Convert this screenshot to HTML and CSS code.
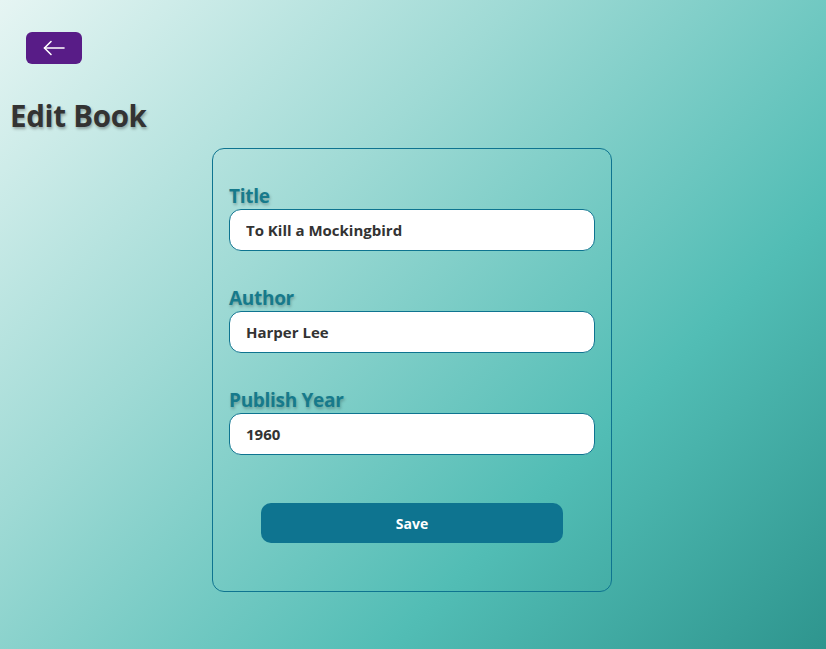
FILE: index.html
```html
<!DOCTYPE html>
<html>
<head>
<meta charset="utf-8">
<link rel="stylesheet" href="styles.css">
</head>
<body>
<div class="page">
  <div class="top">
    <button class="back" aria-label="Back">
      <svg width="24" height="16" viewBox="0 0 24 16" fill="none" stroke="#ffffff" stroke-width="1.6" stroke-linecap="round" stroke-linejoin="round">
        <path d="M22 8H2.5"/>
        <path d="M9 1.5L2.5 8L9 14.5"/>
      </svg>
    </button>
  </div>
  <h1 class="title">Edit Book</h1>
  <form class="card">
    <div class="field">
      <label class="label">Title</label>
      <input class="input" type="text" value="To Kill a Mockingbird">
    </div>
    <div class="field">
      <label class="label">Author</label>
      <input class="input" type="text" value="Harper Lee">
    </div>
    <div class="field">
      <label class="label">Publish Year</label>
      <input class="input" type="text" value="1960">
    </div>
    <div class="actions">
      <button class="save" type="button">Save</button>
    </div>
  </form>
</div>
</body>
</html>
```

FILE: styles.css
```css
* { box-sizing: border-box; }
html, body { margin: 0; height: 100%; }
body {
  font-family: "Open Sans", "Noto Sans", sans-serif;
  background: linear-gradient(135deg, #e6f5f3 0%, #9fdad5 35%, #52bdb5 70%, #2e958e 100%);
  color: #333;
  min-height: 649px;
}
.page { padding: 0 8px; }
.top { padding: 32px 0 0 18px; }
.back {
  width: 56px;
  height: 32px;
  border: none;
  border-radius: 6px;
  background: #581c87;
  display: flex;
  align-items: center;
  justify-content: center;
  padding: 0;
}
.title {
  margin: 32px 0 0 2px;
  font-size: 29.5px;
  font-weight: 700;
  line-height: 40px;
  color: #333;
  letter-spacing: -0.3px;
  text-shadow: 1px 2px 3px rgba(0,0,0,0.3);
}
.card {
  width: 400px;
  margin: 12px auto 0 auto;
  position: relative;
  left: -1px;
  border: 1px solid #0e7490;
  border-radius: 12px;
  padding: 34px 16px 48px 16px;
  display: flex;
  flex-direction: column;
  gap: 34px;
}
.field { display: flex; flex-direction: column; }
.label {
  font-size: 19px;
  font-weight: 700;
  line-height: 26px;
  color: #167a8b;
  letter-spacing: -0.3px;
  text-shadow: 1px 2px 3px rgba(0,0,0,0.25);
}
.input {
  height: 42px;
  border: 1px solid #0e7490;
  border-radius: 12px;
  background: #fff;
  padding: 0 16px;
  font-family: inherit;
  font-size: 15px;
  font-weight: 700;
  color: #333;
  outline: none;
}
.actions { display: flex; justify-content: center; padding-top: 14px; }
.save {
  width: 302px;
  height: 40px;
  border: none;
  border-radius: 10px;
  background: #0e7490;
  color: #fff;
  font-family: inherit;
  font-size: 14px;
  font-weight: 700;
}
```
